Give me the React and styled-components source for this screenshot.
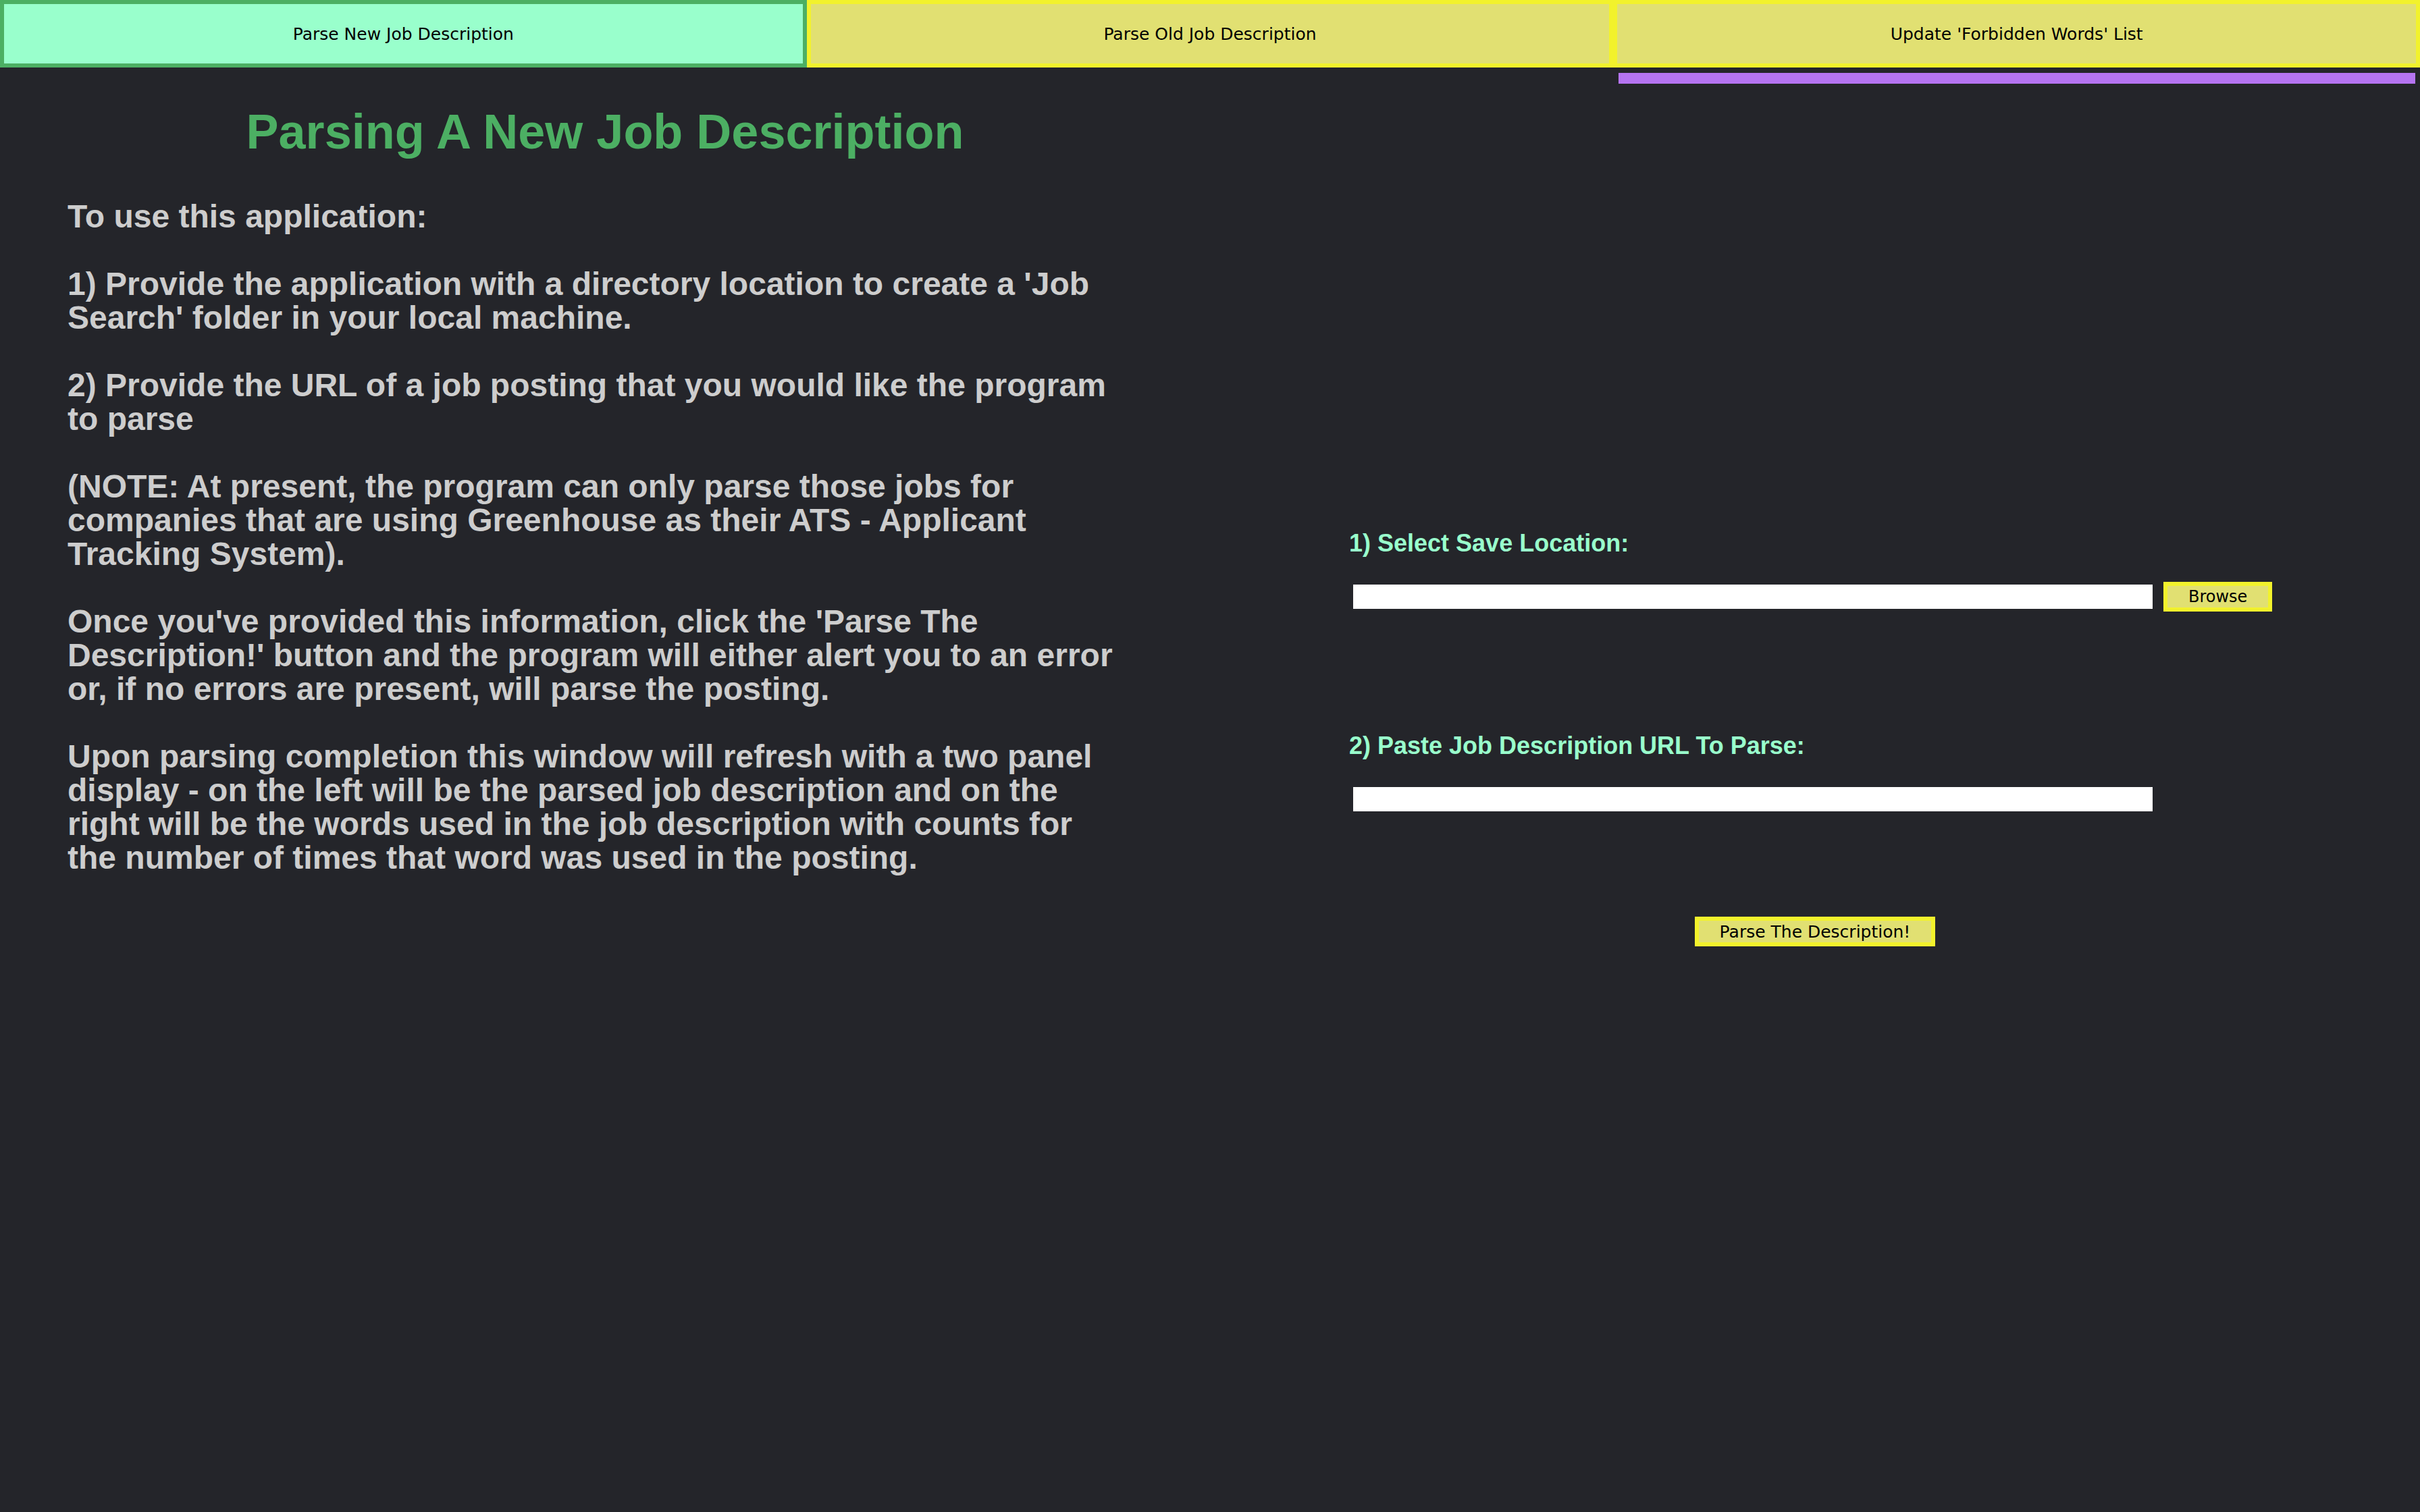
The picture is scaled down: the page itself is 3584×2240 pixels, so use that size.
import React from "react";
import styled, { createGlobalStyle } from "styled-components";

const GlobalStyle = createGlobalStyle`
  html, body {
    margin: 0;
    padding: 0;
    background-color: #24252a;
  }

  #root {
    min-height: 100vh;
  }
`;

const tabs = [
  { label: "Parse New Job Description", active: true },
  { label: "Parse Old Job Description" },
  { label: "Update 'Forbidden Words' List", indicator: true },
];

const instructions = [
  "To use this application:",
  "1) Provide the application with a directory location to create a 'Job Search' folder in your local machine.",
  "2) Provide the URL of a job posting that you would like the program to parse",
  "(NOTE: At present, the program can only parse those jobs for companies that are using Greenhouse as their ATS - Applicant Tracking System).",
  "Once you've provided this information, click the 'Parse The Description!' button and the program will either alert you to an error or, if no errors are present, will parse the posting.",
  "Upon parsing completion this window will refresh with a two panel display - on the left will be the parsed job description and on the right will be the words used in the job description with counts for the number of times that word was used in the posting.",
];

const App = () => {
  return (
    <Page>
      <GlobalStyle />

      <TabBar>
        {tabs.map((tab) => (
          <TabSlot key={tab.label}>
            <Tab $active={tab.active}>{tab.label}</Tab>
            {tab.indicator && <Indicator />}
          </TabSlot>
        ))}
      </TabBar>

      <Main>
        <InfoColumn>
          <Heading>Parsing A New Job Description</Heading>
          {instructions.map((line) => (
            <Paragraph key={line}>{line}</Paragraph>
          ))}
        </InfoColumn>

        <FormColumn>
          <Form>
            <Field $gap={179}>
              <Label>1) Select Save Location:</Label>
              <InputRow>
                <TextInput type="text" />
                <YellowButton $size={24}>Browse</YellowButton>
              </InputRow>
            </Field>

            <Field $gap={152}>
              <Label>2) Paste Job Description URL To Parse:</Label>
              <InputRow>
                <TextInput type="text" />
              </InputRow>
            </Field>

            <Submit>
              <YellowButton $size={25}>Parse The Description!</YellowButton>
            </Submit>
          </Form>
        </FormColumn>
      </Main>
    </Page>
  );
};

const Page = styled.div`
  min-height: 100vh;
  background-color: #24252a;
  display: flex;
  flex-direction: column;
`;

const TabBar = styled.div`
  display: flex;
  height: 124px;
`;

const TabSlot = styled.div`
  flex: 1;
  display: flex;
  flex-direction: column;
`;

const Tab = styled.button`
  box-sizing: border-box;
  height: 100px;
  width: 100%;
  margin: 0;
  border: 6px solid ${(p) => (p.$active ? "#4caf63" : "#f2f22c")};
  background-color: ${(p) => (p.$active ? "#99ffcc" : "#e1e072")};
  color: #000;
  font-family: "DejaVu Sans", sans-serif;
  font-size: 25px;
  display: flex;
  align-items: center;
  justify-content: center;
  cursor: pointer;
`;

const Indicator = styled.div`
  height: 16px;
  margin: 8px 7px 0 8px;
  background-color: #b574f1;
`;

const Main = styled.div`
  display: grid;
  grid-template-columns: 1fr 1fr;
  flex: 1;
`;

const InfoColumn = styled.div`
  padding: 29px 132px 0 100px;
`;

const Heading = styled.h1`
  margin: 0 -32px 59px 0;
  text-align: center;
  color: #4caf63;
  font-family: "Liberation Sans", Arial, sans-serif;
  font-size: 72px;
  line-height: 84px;
  font-weight: 700;
`;

const Paragraph = styled.p`
  margin: 0 0 50px;
  color: #cdcdcd;
  font-family: "Liberation Sans", Arial, sans-serif;
  font-size: 48px;
  line-height: 50px;
  font-weight: 700;
`;

const FormColumn = styled.div`
  display: flex;
  justify-content: center;
  padding-top: 661px;
`;

const Form = styled.div`
  width: 1380px;
  display: flex;
  flex-direction: column;
`;

const Field = styled.div`
  display: flex;
  flex-direction: column;
  gap: 37px;
  margin-bottom: ${(p) => p.$gap}px;
`;

const Label = styled.div`
  color: #99ffcc;
  font-family: "Liberation Sans", Arial, sans-serif;
  font-size: 36px;
  line-height: 40px;
  font-weight: 700;
`;

const InputRow = styled.div`
  display: flex;
  align-items: center;
  gap: 16px;
  height: 44px;
  padding-left: 6px;
`;

const TextInput = styled.input`
  box-sizing: border-box;
  width: 1184px;
  height: 36px;
  margin: 0;
  border: none;
  outline: none;
  background-color: #fff;
  font-family: "DejaVu Sans", sans-serif;
  font-size: 22px;
  padding: 0 8px;
`;

const YellowButton = styled.button`
  box-sizing: border-box;
  height: 44px;
  margin: 0;
  padding: 0 31px;
  border: 6px solid #f2f22c;
  background-color: #e1e072;
  color: #000;
  font-family: "DejaVu Sans", sans-serif;
  font-size: ${(p) => p.$size}px;
  line-height: 1;
  cursor: pointer;
`;

const Submit = styled.div`
  display: flex;
  justify-content: center;
`;

export default App;
